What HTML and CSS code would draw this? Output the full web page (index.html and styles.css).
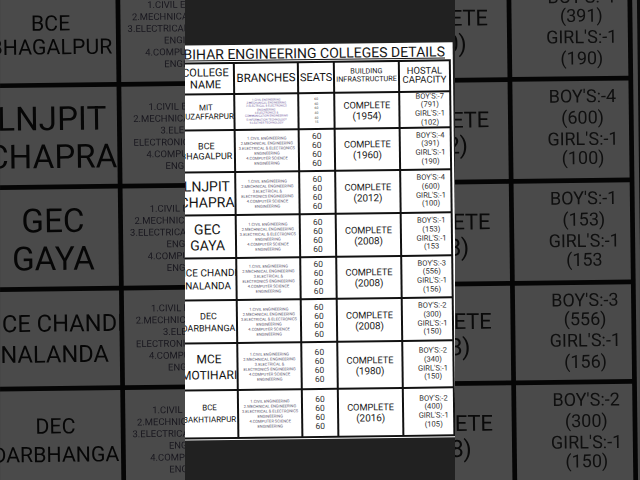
FILE: index.html
```html
<!DOCTYPE html>
<html lang="en">
<head>
<meta charset="utf-8">
<title>Bihar Engineering Colleges Details</title>
<link rel="stylesheet" href="styles.css">
</head>
<body>
<div class="backdrop" id="backdrop"></div>
<main class="stage">
  <div class="frame" id="frame">
    <section class="sheet">
      <h1 class="title">BIHAR ENGINEERING COLLEGES DETAILS</h1>
      <div class="grid">
        <div class="cell hd hd-name">COLLEGE<br>NAME</div>
        <div class="cell hd hd-br">BRANCHES</div>
        <div class="cell hd hd-seat">SEATS</div>
        <div class="cell hd hd-bld">BUILDING<br>INFRASTRUCTURE</div>
        <div class="cell hd hd-host">HOSTAL<br>CAPACITY</div>

        <div class="cell name n-mit">MIT<br>MUZAFFARPUR</div>
        <div class="cell br br-mit">1.CIVIL ENGINEERING<br>2.MECHANICAL ENGINEERING<br>3.ELECTRICAL &amp; ELECTRONICS<br>ENGINEERING<br>4.ELECTRONICS &amp;<br>COMMUNICATION ENGINEERING<br>5.INFORMATION TECHNOLOGY<br>6.LEATHER TECHNOLOGY</div>
        <div class="cell seat seat-mit">60<br>60<br>60<br>40<br>40<br>15</div>
        <div class="cell bld">COMPLETE<br><span class="yr">(1954)</span></div>
        <div class="cell host">BOY'S:-7<br>(791)<br>GIRL'S:-1<br>(102)</div>

        <div class="cell name n-bce">BCE<br>BHAGALPUR</div>
        <div class="cell br">1.CIVIL ENGINEERING<br>2.MECHNICAL ENGINEERING<br>3.ELECTRICAL &amp; ELECTRONICS<br>ENGINEERING<br>4.COMPUTER SCIENCE<br>ENGINEERING</div>
        <div class="cell seat">60<br>60<br>60<br>60</div>
        <div class="cell bld">COMPLETE<br><span class="yr">(1960)</span></div>
        <div class="cell host">BOY'S:-4<br>(391)<br>GIRL'S:-1<br>(190)</div>

        <div class="cell name n-big">LNJPIT<br>CHAPRA</div>
        <div class="cell br">1.CIVIL ENGINEERING<br>2.MECHNICAL ENGINEERING<br>3.ELECTRICAL &amp;<br>ELECTRONICS ENGINEERING<br>4.COMPUTER SCIENCE<br>ENGINEERING</div>
        <div class="cell seat">60<br>60<br>60<br>60</div>
        <div class="cell bld">COMPLETE<br><span class="yr">(2012)</span></div>
        <div class="cell host">BOY'S:-4<br>(600)<br>GIRL'S:-1<br>(100)</div>

        <div class="cell name n-big">GEC<br>GAYA</div>
        <div class="cell br">1.CIVIL ENGINEERING<br>2.MECHNICAL ENGINEERING<br>3.ELECTRICAL &amp; ELECTRONICS<br>ENGINEERING<br>4.COMPUTER SCIENCE<br>ENGINEERING</div>
        <div class="cell seat">60<br>60<br>60<br>60</div>
        <div class="cell bld">COMPLETE<br><span class="yr">(2008)</span></div>
        <div class="cell host">BOY'S:-1<br>(153)<br>GIRL'S:-1<br>(153</div>

        <div class="cell name n-nce">NCE CHANDI<br>NALANDA</div>
        <div class="cell br">1.CIVIL ENGINEERING<br>2.MECHNICAL ENGINEERING<br>3.ELECTRICAL &amp;<br>ELECTRONICS ENGINEERING<br>4.COMPUTER SCIENCE<br>ENGINEERING</div>
        <div class="cell seat">60<br>60<br>60<br>60</div>
        <div class="cell bld">COMPLETE<br><span class="yr">(2008)</span></div>
        <div class="cell host">BOY'S:-3<br>(556)<br>GIRL'S:-1<br>(156)</div>

        <div class="cell name n-dec">DEC<br>DARBHANGA</div>
        <div class="cell br">1.CIVIL ENGINEERING<br>2.MECHNICAL ENGINEERING<br>3.ELECTRICAL &amp; ELECTRONICS<br>ENGINEERING<br>4.COMPUTER SCIENCE<br>ENGINEERING</div>
        <div class="cell seat">60<br>60<br>60<br>60</div>
        <div class="cell bld">COMPLETE<br><span class="yr">(2008)</span></div>
        <div class="cell host">BOY'S:-2<br>(300)<br>GIRL'S:-1<br>(150)</div>

        <div class="cell name n-mce">MCE<br>MOTIHARI</div>
        <div class="cell br">1.CIVIL ENGINEERING<br>2.MECHNICAL ENGINEERING<br>3.ELECTRICAL &amp;<br>ELECTRONICS ENGINEERING<br>4.COMPUTER SCIENCE<br>ENGINEERING</div>
        <div class="cell seat">60<br>60<br>60<br>60</div>
        <div class="cell bld">COMPLETE<br><span class="yr">(1980)</span></div>
        <div class="cell host">BOY'S:-2<br>(340)<br>GIRL'S:-1<br>(150)</div>

        <div class="cell name n-bak">BCE<br>BAKHTIARPUR</div>
        <div class="cell br">1.CIVIL ENGINEERING<br>2.MECHNICAL ENGINEERING<br>3.ELECTRICAL &amp; ELECTRONICS<br>ENGINEERING<br>4.COMPUTER SCIENCE<br>ENGINEERING</div>
        <div class="cell seat">60<br>60<br>60<br>60</div>
        <div class="cell bld">COMPLETE<br><span class="yr">(2016)</span></div>
        <div class="cell host">BOY'S:-2<br>(400)<br>GIRL'S:-1<br>(105)</div>
      </div>
    </section>
  </div>
</main>
<script src="script.js"></script>
</body>
</html>
```

FILE: styles.css
```css
html, body {
  margin: 0;
  padding: 0;
  background: #222;
  width: 640px;
  height: 480px;
  overflow: hidden;
  font-family: Roboto, "Noto Sans", "Liberation Sans", sans-serif;
}

.backdrop {
  position: fixed;
  inset: 0;
  overflow: hidden;
  filter: brightness(0.29) blur(0.7px);
  z-index: 0;
}

.frame-echo {
  position: absolute;
  left: 185px;
  top: 0;
  transform: scale(2.37);
  transform-origin: 135px 236px;
}

.stage {
  position: relative;
  z-index: 1;
  display: flex;
  justify-content: center;
  height: 480px;
}

.frame {
  width: 270px;
  height: 480px;
  overflow: hidden;
  background: #212121;
  padding-top: 44px;
  box-sizing: border-box;
}

.sheet {
  width: 277px;
  margin-left: -7px;
  background: #fff;
  padding-bottom: 1px;
  transform: rotate(-0.7deg);
}

.title {
  margin: 0;
  padding-top: 2px;
  font-size: 14px;
  line-height: 15px;
  font-weight: 400;
  color: #151515;
  text-align: center;
  text-decoration: underline;
  text-decoration-thickness: 1px;
  text-underline-offset: 1px;
  white-space: nowrap;
}

.grid {
  display: grid;
  grid-template-columns: 55px 62px 34px 63px 49px;
  grid-template-rows: 29px 34px 40px 41px 41px 40px 41px 45px 46px;
  gap: 2px;
  padding: 2px;
  background: #111;
  width: max-content;
}

.cell {
  background: #fff;
  display: flex;
  flex-direction: column;
  justify-content: center;
  align-items: center;
  text-align: center;
  white-space: nowrap;
  overflow: visible;
  color: #1a1a1a;
}

.hd { color: #111; }
.hd-name { font-size: 11px; line-height: 12px; }
.hd-br { font-size: 11.5px; line-height: 13px; }
.hd-seat { font-size: 11px; line-height: 13px; }
.hd-bld { font-size: 7.3px; line-height: 8px; padding-bottom: 4px; color: #222; }
.hd-host { font-size: 9.5px; line-height: 9px; padding-bottom: 3px; color: #222; }

.name { color: #151515; }
.n-mit { font-size: 8px; line-height: 9px; }
.n-bce { font-size: 9px; line-height: 10px; }
.n-big { font-size: 14px; line-height: 16px; }
.n-nce { font-size: 10px; line-height: 13px; }
.n-dec { font-size: 9px; line-height: 12px; }
.n-mce { font-size: 12px; line-height: 16px; }
.n-bak { font-size: 8px; line-height: 12px; }

.br {
  font-size: 4px;
  line-height: 5px;
  color: #555068;
}
.br-mit {
  font-size: 2.9px;
  line-height: 3.3px;
  color: #6e5a9a;
}

.seat {
  font-size: 8.5px;
  line-height: 9px;
  color: #333;
}
.seat-mit {
  font-size: 3.4px;
  line-height: 4.6px;
  color: #555;
}

.bld {
  font-size: 9.3px;
  line-height: 11px;
  color: #222;
  letter-spacing: -0.1px;
}
.yr { font-size: 10px; }

.host {
  font-size: 7.6px;
  line-height: 8.6px;
  color: #333;
  padding-left: 10px;
}
```

FILE: script.js
```js
(function () {
  var frame = document.getElementById('frame');
  var echo = frame.cloneNode(true);
  echo.removeAttribute('id');
  echo.classList.add('frame-echo');
  echo.setAttribute('aria-hidden', 'true');
  document.getElementById('backdrop').appendChild(echo);
})();
```
